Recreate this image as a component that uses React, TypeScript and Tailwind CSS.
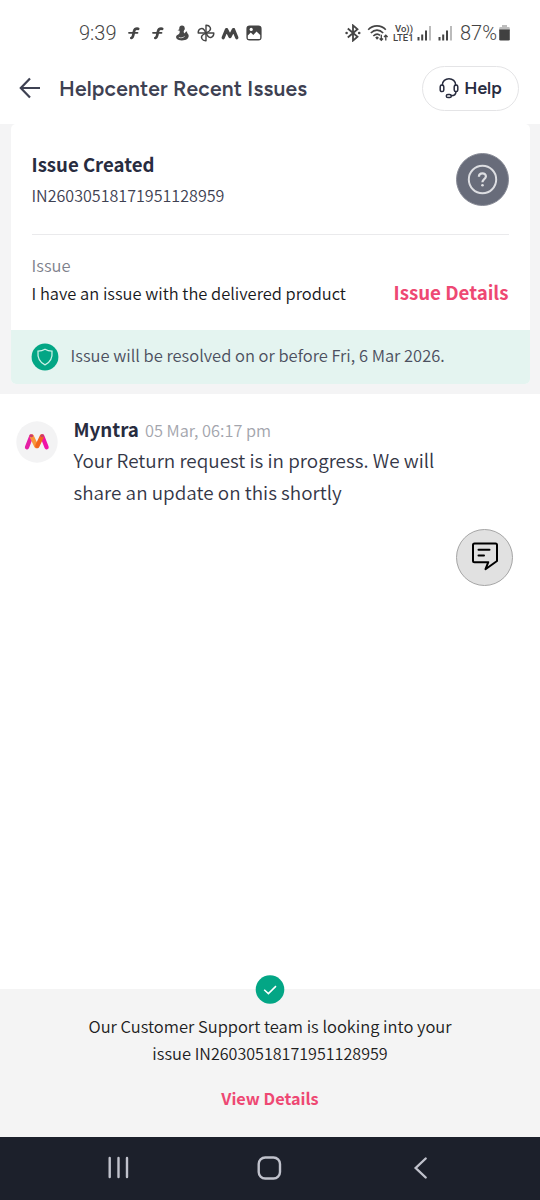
import React from "react";

const ISSUE_ID = "IN26030518171951128959";

const FlipkartIcon = () => (
  <svg viewBox="0 0 12 14" className="w-3 h-3.5" fill="none" stroke="#444" strokeLinecap="round">
    <path d="M3.3 12 C5.6 11.5 5.4 7 6.2 4.7 C6.8 2.8 8.4 2.5 10.2 2.8" strokeWidth="2.7" />
    <path d="M1 6.8h8.5" strokeWidth="1.8" />
  </svg>
);

const SwanIcon = () => (
  <svg viewBox="0 0 14 16" className="w-3.5 h-4" fill="#484848">
    <circle cx="7" cy="3.3" r="2.7" />
    <path d="M4.6 4.5C4.4 6 5.2 7 4.3 8.5 3.6 9.8 2 9.6 1.3 11c-.9 2.2.9 4.4 5.5 4.4 4.8 0 6.9-2 6.9-4.7 0-1.6-1.3-2-1.7-2.9.2-.6.4-1-.2-1.3-.9-.3-1.9.8-1.8 2.1L8.8 7.5c-.5-1 .7-2.5.7-3.9z" />
    <path d="M5 4 2.5 5.2 5 5.8z" />
    <path d="M3.8 12.4c2 .8 4.5.3 5.8-1" stroke="#fff" strokeWidth=".7" fill="none" />
  </svg>
);

const PinwheelIcon = () => (
  <svg viewBox="0 0 18 18" className="w-[18px] h-[18px]" fill="none" stroke="#444" strokeWidth="1.4" strokeLinejoin="round">
    <path d="M9 9V1.2C13 1 14.8 5 12.3 7L9 9" />
    <path d="M9 9h7.8c.2 4-3.8 5.8-5.8 3.3L9 9" />
    <path d="M9 9v7.8C5 17 3.2 13 5.7 11L9 9" />
    <path d="M9 9H1.2C1 5 5 3.2 7 5.7L9 9" />
  </svg>
);

const MIcon = () => (
  <svg viewBox="0 0 18 13" className="w-[18px] h-[13px]" fill="none" stroke="#444" strokeWidth="3.3" strokeLinecap="round" strokeLinejoin="round">
    <path d="M2.2 10.7 5.5 2.6 9 9.6 12.5 2.6 15.8 10.7" />
  </svg>
);

const GalleryIcon = () => (
  <svg viewBox="0 0 16 16" className="w-4 h-4">
    <rect x="1.2" y="1.2" width="13.6" height="13.6" rx="2.5" fill="#444" stroke="#444" strokeWidth="1.6" />
    <path d="M1.8 10.5 4.8 7.5 7.3 10 10.5 6.4 14.2 10v3.2q0 .8-.8.8H2.6q-.8 0-.8-.8z" fill="#fff" />
    <circle cx="5.2" cy="4.4" r="1.6" fill="#fff" />
  </svg>
);

const BluetoothIcon = () => (
  <svg viewBox="0 0 16 18" className="w-4 h-[18px]" fill="none" stroke="#444" strokeWidth="1.8">
    <path d="M2.8 4.5 12.5 12.8 8 16.6V1.4L12.5 5.2 2.8 13.5" />
    <circle cx="1.6" cy="9" r="1.3" fill="#444" stroke="none" />
    <circle cx="14.2" cy="9" r="1.3" fill="#444" stroke="none" />
  </svg>
);

const WifiIcon = () => (
  <svg viewBox="0 0 22 18" className="w-[22px] h-[18px]" fill="none" stroke="#444" strokeWidth="1.6">
    <path d="M1.2 5.8C6 .6 14 .6 18.8 5.8" />
    <path d="M3.8 9C7.5 5.2 12.5 5.2 16.2 9" />
    <path d="M6.3 12C8.7 9.7 11.3 9.7 13 11.4" />
    <path d="M8.2 13.5 10 12.2 12 13.8 10 15.8Z" fill="#444" stroke="none" />
    <path d="M14.3 10.8v5.4M12.6 14.5l1.7 1.8 1.7-1.8M18.8 16.5v-5.2M17 13l1.8-1.9 1.8 1.9" strokeWidth="1.3" />
  </svg>
);

const SignalIcon = () => (
  <svg viewBox="0 0 15 16" className="w-[15px] h-4">
    <path d="M.5 12h2v3.5h-2zM4.2 9.5h2v6h-2zM8 5.5h2v10H8z" fill="#444" />
    <path d="M12 1h2v14.5h-2z" fill="#bbb" />
  </svg>
);

const BatteryIcon = () => (
  <svg viewBox="0 0 11 16" className="w-[11px] h-4">
    <path d="M3 0h5v2h1.5q1.3 0 1.3 1.3V6H.2V3.3Q.2 2 1.5 2H3z" fill="#bdbdbd" />
    <path d="M.2 4.6h10.6v9.6q0 1.3-1.3 1.3h-8Q.2 15.5.2 14.2z" fill="#404040" />
  </svg>
);

const HeadsetIcon = () => (
  <svg viewBox="0 0 20 22" className="w-5 h-[22px]" fill="none" stroke="#282c3f" strokeWidth="1.5" strokeLinecap="round">
    <path d="M3.2 8.4C3.2-.6 16.8-.6 16.8 8.4" />
    <rect x="1.2" y="8" width="3.6" height="6.6" rx="1.7" />
    <rect x="15.2" y="8" width="3.6" height="6.6" rx="1.7" />
    <path d="M17 14.6c-.2 2.9-2 4.2-4.8 4.2" />
    <rect x="7.3" y="17.4" width="5" height="3.2" rx="1.6" />
  </svg>
);

const StatusBar = () => (
  <div className="h-[52px] pt-[14px] flex items-center text-[#444] font-[Roboto,sans-serif]">
    <span className="ml-[79px] w-[43px] text-[20px] leading-6 font-light">9:39</span>
    {[FlipkartIcon, FlipkartIcon, SwanIcon, PinwheelIcon, MIcon, GalleryIcon].map((Icon, i) => (
      <span key={i} className="w-6 flex justify-center">
        <Icon />
      </span>
    ))}
    <div className="ml-auto mr-[30px] flex items-center">
      <BluetoothIcon />
      <span className="ml-1.5">
        <WifiIcon />
      </span>
      <div className="ml-[4px] w-[21px] text-[9.5px] leading-[9px] font-medium whitespace-nowrap">
        <div className="pl-0.5">Vo))</div>
        <div>LTE1</div>
      </div>
      <span className="ml-[3px]">
        <SignalIcon />
      </span>
      <span className="ml-1.5">
        <SignalIcon />
      </span>
      <span className="ml-[7px] w-[39px] text-[20px] leading-6 font-light">87%</span>
      <BatteryIcon />
    </div>
  </div>
);

const Header = () => (
  <header className="h-[72px] flex items-center pl-[19px] pr-[21px] font-[Figtree,Inter,sans-serif]">
    <svg viewBox="0 0 22 22" className="w-[22px] h-[22px]" fill="none" stroke="#3e4152" strokeWidth="2.2">
      <path d="M21 11H2M11 1.5 1.8 11 11 20.5" />
    </svg>
    <h1 className="ml-[18px] pt-px text-[21px] leading-7 font-semibold tracking-[0.18px] text-[#3e4152] whitespace-nowrap">
      Helpcenter Recent Issues
    </h1>
    <button className="ml-auto h-[45px] w-[97px] rounded-full border border-[#e4e4e6] flex items-center justify-center gap-[5px] pb-px text-[17.5px] font-semibold text-[#282c3f]">
      <HeadsetIcon />
      <span className="pt-0.5">Help</span>
    </button>
  </header>
);

const IssueCard = () => (
  <section className="bg-[#f4f4f5] px-[10.5px] h-[270px]">
    <div className="bg-white rounded-[5px] overflow-hidden h-[259.5px] flex flex-col">
      <div className="mx-[21px] h-[111px] border-b border-[#eaeaec] flex justify-between">
        <div className="pt-[26px]">
          <h2 className="text-[18.6px] leading-7 font-bold text-[#282c3f] whitespace-nowrap">Issue Created</h2>
          <p className="mt-[3px] text-[16.1px] leading-7 text-[#3e4152] whitespace-nowrap">{ISSUE_ID}</p>
        </div>
        <svg viewBox="0 0 54 54" className="mt-7 w-[54px] h-[54px]" fill="none">
          <circle cx="27.5" cy="27.5" r="26" fill="#686c7a" stroke="#888b96" />
          <circle cx="27.5" cy="27.5" r="13.7" stroke="#dddee2" strokeWidth="2" />
          <path d="M23.9 24.8c0-4.7 7.2-4.5 7-.3-.1 2.7-3.5 2.6-3.5 5.7" stroke="#dddee2" strokeWidth="2.2" />
          <circle cx="27.5" cy="33.2" r="1.3" fill="#dddee2" />
        </svg>
      </div>
      <div className="mx-[21px] flex-1 flex justify-between">
        <div className="pt-[16px]">
          <div className="text-[16.5px] leading-7 text-[#7e818c]">Issue</div>
          <div className="text-[16.48px] leading-7 text-[#18191c] whitespace-nowrap">
            I have an issue with the delivered product
          </div>
        </div>
        <button className="pt-[43px] self-start text-[18.7px] leading-7 font-bold text-[#ee4873] whitespace-nowrap">
          Issue Details
        </button>
      </div>
      <div className="h-[54px] bg-[#e4f4f0] flex items-center pl-5">
        <svg viewBox="0 0 28 28" className="w-7 h-7" fill="none">
          <circle cx="14" cy="14" r="13.4" fill="#03a685" />
          <path d="M14 6.2c2 1.3 4.4 1.9 7 1.9.6 6-1.5 11.2-7 13.7-5.5-2.5-7.6-7.7-7-13.7 2.6 0 5-.6 7-1.9z" stroke="#c9f0e6" strokeWidth="1.3" />
        </svg>
        <span className="ml-3 -mt-[3px] text-[16.5px] leading-7 text-[#4c505f] whitespace-nowrap">
          Issue will be resolved on or before Fri, 6 Mar 2026.
        </span>
      </div>
    </div>
  </section>
);

const MyntraAvatar = () => (
  <svg viewBox="0 0 42 42" className="w-[42px] h-[42px] shrink-0" fill="none">
    <circle cx="21" cy="21" r="20.7" fill="#f3f3f4" />
    <g strokeLinecap="round" strokeWidth="4.3">
      <path d="M11 26.2 15.2 15.5" stroke="#e51fa5" />
      <path d="M30.6 26.2 26.4 15.5" stroke="#f012a8" />
      <path d="M15.8 15.5 20.3 25" stroke="#f9963a" />
      <path d="M25.8 15.5 21.3 25" stroke="#f2651d" />
      <path d="M15 14.8 15.8 14.8M25.8 14.8 26.6 14.8" stroke="#c93c6c" strokeWidth="2.8" />
    </g>
  </svg>
);

const Message = () => (
  <div className="flex pl-[15.5px] pt-[19px]">
    <div className="pt-[8px]">
      <MyntraAvatar />
    </div>
    <div className="ml-[16px]">
      <div className="flex items-baseline h-[31px] leading-8 whitespace-nowrap">
        <span className="text-[18.8px] font-bold text-[#282c3f]">Myntra</span>
        <span className="ml-[6px] text-[16.35px] text-[#a3a5ad]">05 Mar, 06:17 pm</span>
      </div>
      <p className="text-[18.86px] leading-[31.5px] text-[#343747] whitespace-nowrap">
        Your Return request is in progress. We will
        <br />
        share an update on this shortly
      </p>
    </div>
  </div>
);

const Footer = () => (
  <footer className="relative h-[148px] bg-[#f4f4f4] pt-[24px] text-center text-[16.5px] leading-[27px] text-[#202021]">
    <svg viewBox="0 0 30 30" className="absolute -top-[15px] left-[255px] w-[30px] h-[30px]" fill="none">
      <circle cx="15" cy="15.5" r="14.3" fill="#03a685" />
      <path d="m9.2 15.8 4.2 3.8 7.6-7.5" stroke="#fff" strokeWidth="1.5" />
    </svg>
    <p>
      Our Customer Support team is looking into your
      <br />
      issue <span className="text-[16.1px]">{ISSUE_ID}</span>
    </p>
    <button className="mt-[18px] block mx-auto text-[16.3px] font-bold text-[#ee4873]">View Details</button>
  </footer>
);

const NavBar = () => (
  <nav className="h-[63px] bg-[#1c202b]">
    <svg viewBox="0 0 540 63" className="w-full h-full" fill="none" stroke="#c0c2cc" strokeWidth="2.4" strokeLinecap="round">
      <path d="M109.7 21v19M118.5 21v19M127 21v19" />
      <rect x="258.7" y="20.5" width="21.3" height="21" rx="6.5" />
      <path d="m425.7 21.5-10 9.5 10 9.5" />
    </svg>
  </nav>
);

const App: React.FC = () => {
  return (
    <div className="w-[540px] h-[1200px] bg-white flex flex-col overflow-hidden font-['Noto_Sans_CJK_SC','Noto_Sans',sans-serif] font-[350]">
      <StatusBar />
      <Header />
      <IssueCard />
      <main className="flex-1 relative">
        <Message />
        {/* Floating chat button */}
        <button className="absolute left-[456px] top-[135px] w-[57px] h-[57px] rounded-full border border-[#a5a5a5] bg-[#e1e1e1] flex items-center justify-center">
          <svg viewBox="0 0 28 30" className="w-7 h-[30px] -mt-[3px]" fill="none" stroke="#000" strokeWidth="2" strokeLinejoin="round" strokeLinecap="round">
            <path d="M3.5 2.5h21q1.5 0 1.5 1.5v16L14.5 28.2l2.8-7H3.5Q2 21.2 2 19.7V4Q2 2.5 3.5 2.5z" />
            <path d="M7.5 8.8h11M7.5 14.5h5.5" />
          </svg>
        </button>
      </main>
      <Footer />
      <NavBar />
    </div>
  );
};

export default App;
